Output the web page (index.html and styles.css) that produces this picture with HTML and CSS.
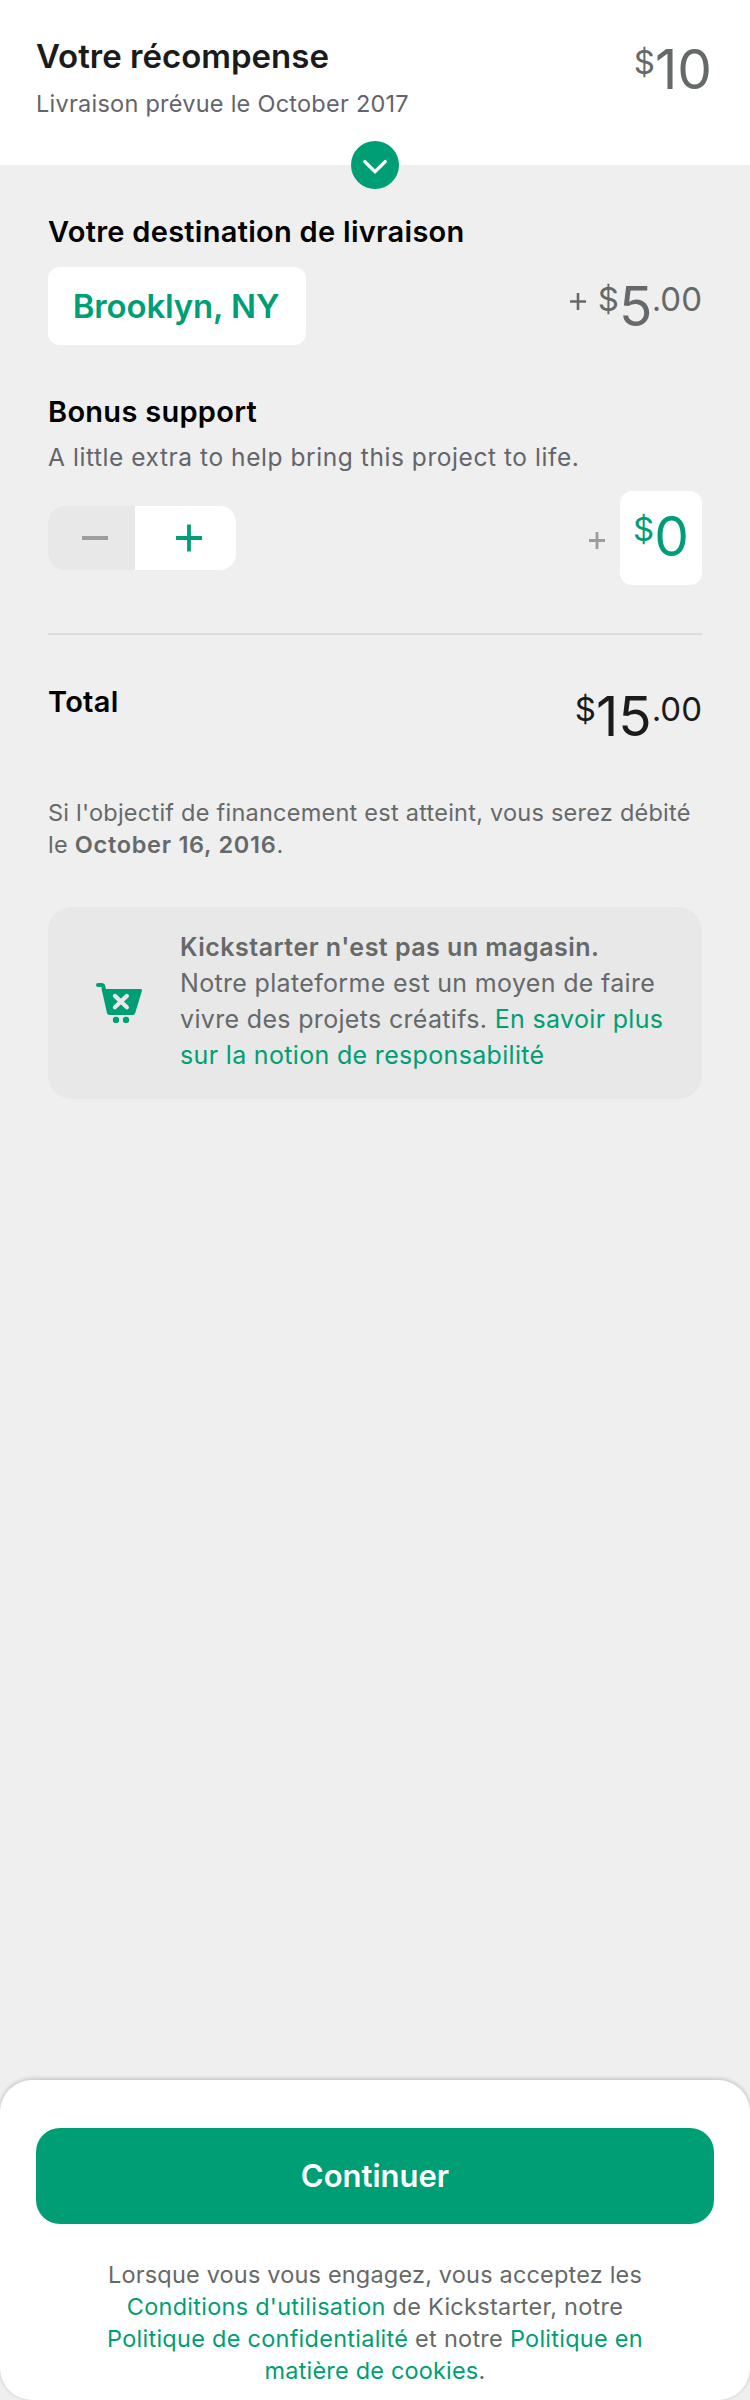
FILE: index.html
```html
<!DOCTYPE html>
<html lang="fr">
<head>
<meta charset="utf-8">
<title>Votre récompense</title>
<link rel="stylesheet" href="styles.css">
</head>
<body>
<div class="page">
  <header class="reward">
    <div>
      <h1 class="reward-title">Votre récompense</h1>
      <p class="reward-delivery">Livraison prévue le October 2017</p>
    </div>
    <div class="price reward-price"><span class="minor">$</span><span class="major">10</span></div>
    <button class="expand" aria-label="Afficher">
      <svg width="48" height="48" viewBox="0 0 48 48"><path d="M13.8 20.6 24 30.6 34.2 20.6" fill="none" stroke="#fff" stroke-width="3.4" stroke-linecap="round"/></svg>
    </button>
  </header>

  <main class="content">
    <h2 class="heading heading-shipping">Votre destination de livraison</h2>
    <div class="row shipping">
      <button class="location">Brooklyn, NY</button>
      <div class="price shipping-price">
        <svg class="plus" width="16" height="17" viewBox="0 0 16 17"><path d="M0 8.5H16M8 0V17" stroke="#656969" stroke-width="2.6"/></svg>
        <span class="minor">$</span><span class="major">5</span><span class="minor cents">.00</span>
      </div>
    </div>

    <h2 class="heading heading-bonus">Bonus support</h2>
    <p class="hint">A little extra to help bring this project to life.</p>
    <div class="row bonus">
      <div class="stepper">
        <button class="step step-minus" aria-label="Moins"><svg width="26" height="28" viewBox="0 0 26 28"><path d="M0 14H26" stroke="#9b9e9e" stroke-width="4"/></svg></button>
        <button class="step step-plus" aria-label="Plus"><svg width="26" height="28" viewBox="0 0 26 28"><path d="M0 14H26M13 .6V27.4" stroke="#009e74" stroke-width="3.8"/></svg></button>
      </div>
      <div class="bonus-amount">
        <svg class="bonus-plus" width="16" height="17" viewBox="0 0 16 17"><path d="M0 8.5H16M8 0V17" stroke="#9b9e9e" stroke-width="2.8"/></svg>
        <div class="price amount-box"><span class="minor">$</span><span class="major">0</span></div>
      </div>
    </div>

    <hr class="divider">

    <div class="total">
      <h2 class="heading heading-total">Total</h2>
      <div class="price total-price"><span class="minor">$</span><span class="major">15</span><span class="minor cents">.00</span></div>
    </div>

    <p class="charge-note">Si l'objectif de financement est atteint, vous serez débité<br>le <strong>October 16, 2016</strong>.</p>

    <aside class="notice">
      <svg class="cart" width="46" height="40" viewBox="0 0 46 40">
        <path d="M2 2H5.6Q7 2 7.3 3.4L8.2 7.8" fill="none" stroke="#009e74" stroke-width="4" stroke-linecap="round"/>
        <path d="M5.6 6H44.5Q46.4 6 45.9 8L39.2 30Q38.6 32 36.6 32H13.4Q11.5 32 11 30Z" fill="#009e74"/>
        <path d="M18.9 12.9 30.9 24.2M30.9 12.9 18.9 24.2" stroke="#e8e8e8" stroke-width="4.2" stroke-linecap="round"/>
        <circle cx="20" cy="37" r="3.2" fill="#009e74"/><circle cx="30" cy="37" r="3.2" fill="#009e74"/>
      </svg>
      <p class="notice-text"><strong>Kickstarter n'est pas un magasin.</strong><br>Notre plateforme est un moyen de faire<br>vivre des projets créatifs. <a>En savoir plus<br>sur la notion de responsabilité</a></p>
    </aside>
  </main>

  <footer class="checkout">
    <button class="continue">Continuer</button>
    <p class="legal">Lorsque vous vous engagez, vous acceptez les<br><span class="legal-wide"><a>Conditions d'utilisation</a> de Kickstarter, notre<br><a>Politique de confidentialité</a> et notre <a>Politique en</a></span><br><a>matière de cookies</a>.</p>
  </footer>
</div>
</body>
</html>
```
FILE: styles.css
```css
* { box-sizing: border-box; }
body, h1, h2, p, hr { margin: 0; padding: 0; }
body { background: #efefef; font-family: Inter, "Liberation Sans", sans-serif; }
button { border: 0; padding: 0; margin: 0; font: inherit; background: none; }
svg { display: block; }
a { color: #009e74; }
strong { font-weight: 600; }

.page { width: 750px; height: 2400px; display: flex; flex-direction: column; overflow: hidden; }

.reward { position: relative; height: 165px; padding: 36px 38px 0 36px; background: #fff; display: flex; justify-content: space-between; }
.reward-title { font-size: 33px; line-height: 40px; font-weight: 600; color: #1b1b1b; }
.reward-delivery { margin-top: 13px; font-size: 23.5px; line-height: 30px; letter-spacing: 0.25px; color: #64646b; }
.expand { position: absolute; left: 351px; bottom: -24px; width: 48px; height: 48px; border-radius: 50%; background: #009e74; }

.price { display: flex; line-height: 60px; color: #656969; white-space: nowrap; }
.major { font-size: 55px; letter-spacing: 0; }
.minor { font-size: 33px; line-height: 47px; }
.reward-price { margin-top: 3px; }

.content { padding: 49px 48px 0; }
.heading { font-size: 29px; line-height: 36px; font-weight: 600; letter-spacing: 0.28px; color: #000; }
.row { display: flex; justify-content: space-between; margin-top: 18px; }
.location { height: 78px; width: 258px; padding-right: 2px; border-radius: 12px; background: #fff; color: #009e74; font-size: 33px; font-weight: 600; letter-spacing: -0.15px; }
.shipping { height: 78px; margin-top: 17px; }
.shipping-price { margin-top: 9px; }
.shipping-price .major { letter-spacing: -0.7px; }
.plus { margin: 17px 12px 0 0; }
.heading-bonus { margin-top: 49px; }
.hint { margin-top: 11px; font-size: 24.5px; line-height: 32px; color: #64646b; letter-spacing: 0.56px; }
.bonus { height: 94px; align-items: center; }
.stepper { display: flex; width: 188px; height: 64px; border-radius: 16px; overflow: hidden; background: #fff; }
.step { display: flex; align-items: center; justify-content: center; }
.step-minus { width: 87px; padding-left: 7px; background: #e8e8e8; }
.step-plus { width: 101px; padding-left: 7px; }
.bonus-amount { display: flex; align-items: center; gap: 15px; }
.bonus-plus { margin-top: 5px; }
.amount-box { width: 82px; height: 94px; padding: 15px 0 0 13px; border-radius: 12px; background: #fff; color: #009e74; }
.divider { margin-top: 48px; height: 2px; border: 0; background: #dcdcdc; }
.total { display: flex; justify-content: space-between; height: 60px; margin-top: 49px; }
.total-price { margin-top: 2px; color: #1b1b1b; }
.charge-note { margin-top: 53px; font-size: 23.5px; line-height: 32px; color: #656969; letter-spacing: 0.24px; white-space: nowrap; }
.charge-note strong { letter-spacing: 0.72px; }
.notice { display: flex; height: 192px; margin-top: 46px; padding: 22px 0 0 48px; border-radius: 24px; background: #e8e8e8; }
.cart { margin-top: 54px; }
.notice-text { margin-left: 38px; font-size: 25px; line-height: 36px; color: #656969; letter-spacing: 0.33px; white-space: nowrap; }
.notice-text strong { letter-spacing: 0.47px; }

.checkout { margin-top: auto; height: 320px; padding: 48px 36px 0; border-radius: 32px; background: #fff; box-shadow: 0 -1px 4px rgba(0, 0, 0, 0.22); }
.continue { display: block; width: 678px; height: 96px; padding-bottom: 2px; border-radius: 24px; background: #009e74; color: #fff; font-size: 31px; font-weight: 600; }
.legal { margin-top: 35px; text-align: center; font-size: 23.5px; line-height: 32px; color: #656969; letter-spacing: 0.18px; white-space: nowrap; }
.legal-wide { letter-spacing: 0.26px; }
```
